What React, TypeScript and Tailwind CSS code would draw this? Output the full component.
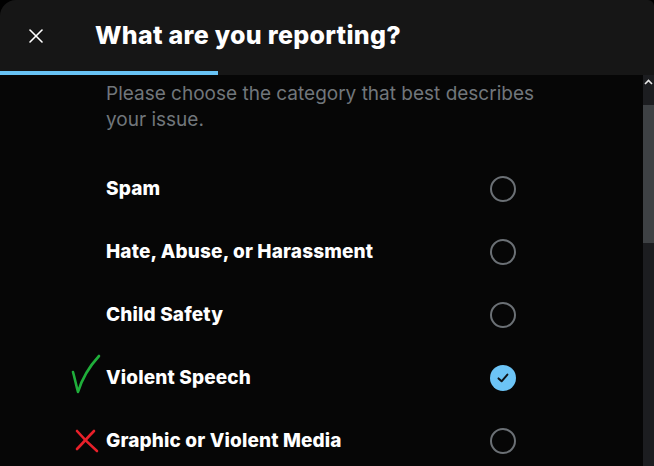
import { X } from 'lucide-react';

const options = [
    { label: 'Spam' },
    { label: 'Hate, Abuse, or Harassment' },
    { label: 'Child Safety' },
    { label: 'Violent Speech', checked: true, mark: 'ok' },
    { label: 'Graphic or Violent Media', mark: 'bad' },
];

function Radio({ checked }: { checked?: boolean }) {
    if (checked) {
        return (
            <div className="w-[26px] h-[26px] rounded-full bg-[#6cc4f6] flex items-center justify-center">
                <svg width="14" height="14" viewBox="0 0 14 14" fill="none">
                    <path d="M2.5 7.4 L5.6 10.3 L11.4 3.6" stroke="#0f1419" strokeWidth="2" strokeLinecap="round" strokeLinejoin="round" />
                </svg>
            </div>
        );
    }
    return <div className="w-[26px] h-[26px] rounded-full border-2 border-[#6b7075]" />;
}

export default function App() {
    return (
        <div className="w-[654px] h-[466px] bg-black overflow-hidden" style={{ fontFamily: 'Inter, Roboto, "Liberation Sans", sans-serif' }}>
            <div className="h-full flex flex-col bg-[#161616] rounded-tl-2xl rounded-tr-[6px]">
                {/* Header */}
                <div className="h-[71px] flex items-center shrink-0">
                    <div className="w-[70px] flex justify-center pl-[1px]">
                        <X size={24} strokeWidth={1.6} className="text-white" />
                    </div>
                    <h1 className="ml-[25px] text-[25px] font-extrabold text-white tracking-[0.3px]">What are you reporting?</h1>
                </div>

                {/* Progress */}
                <div className="h-[4px] shrink-0">
                    <div className="h-full w-[218px] bg-[#67c2f4]" />
                </div>

                {/* Body */}
                <div className="flex-1 flex min-h-0 bg-[#060606]">
                    <div className="flex-1 pl-[106px] pt-[6px]">
                        <p className="text-[19px] leading-[26px] text-[#71767b] w-[440px]">
                            Please choose the category that best describes your issue.
                        </p>
                        <div className="mt-[24px] flex flex-col">
                            {options.map((o) => (
                                <div key={o.label} className="relative h-[63px] w-[410px] flex items-center justify-between">
                                    <span className="text-[19px] font-extrabold text-white tracking-[0.15px] pt-[1px]">{o.label}</span>
                                    <Radio checked={o.checked} />
                                    {o.mark === 'ok' && (
                                        <svg className="absolute left-[-36px] top-[6px]" width="32" height="44" viewBox="0 0 32 44" fill="none">
                                            <path d="M3 20 C5 27 6 33 8 40 C11 30 17 17 29 4" stroke="#1fae3a" strokeWidth="2.6" strokeLinecap="round" strokeLinejoin="round" />
                                        </svg>
                                    )}
                                    {o.mark === 'bad' && (
                                        <svg className="absolute left-[-32px] top-[20px]" width="26" height="24" viewBox="0 0 26 24" fill="none">
                                            <path d="M3 2 C9 9 15 15 23 22" stroke="#e8202a" strokeWidth="2.6" strokeLinecap="round" />
                                            <path d="M20 2 C14 8 9 14 3 20" stroke="#e8202a" strokeWidth="2.6" strokeLinecap="round" />
                                        </svg>
                                    )}
                                </div>
                            ))}
                        </div>
                    </div>

                    {/* Scrollbar */}
                    <div className="w-[11px] shrink-0 bg-[#1c1d20] flex flex-col">
                        <div className="h-[30px] flex justify-center pt-[4px]">
                            <svg width="9" height="6" viewBox="0 0 9 6" fill="none">
                                <path d="M1 5 L4.5 1.5 L8 5" stroke="#e6e6e6" strokeWidth="1.6" />
                            </svg>
                        </div>
                        <div className="h-[138px] bg-[#3e4144]" />
                    </div>
                </div>
            </div>
        </div>
    );
}
